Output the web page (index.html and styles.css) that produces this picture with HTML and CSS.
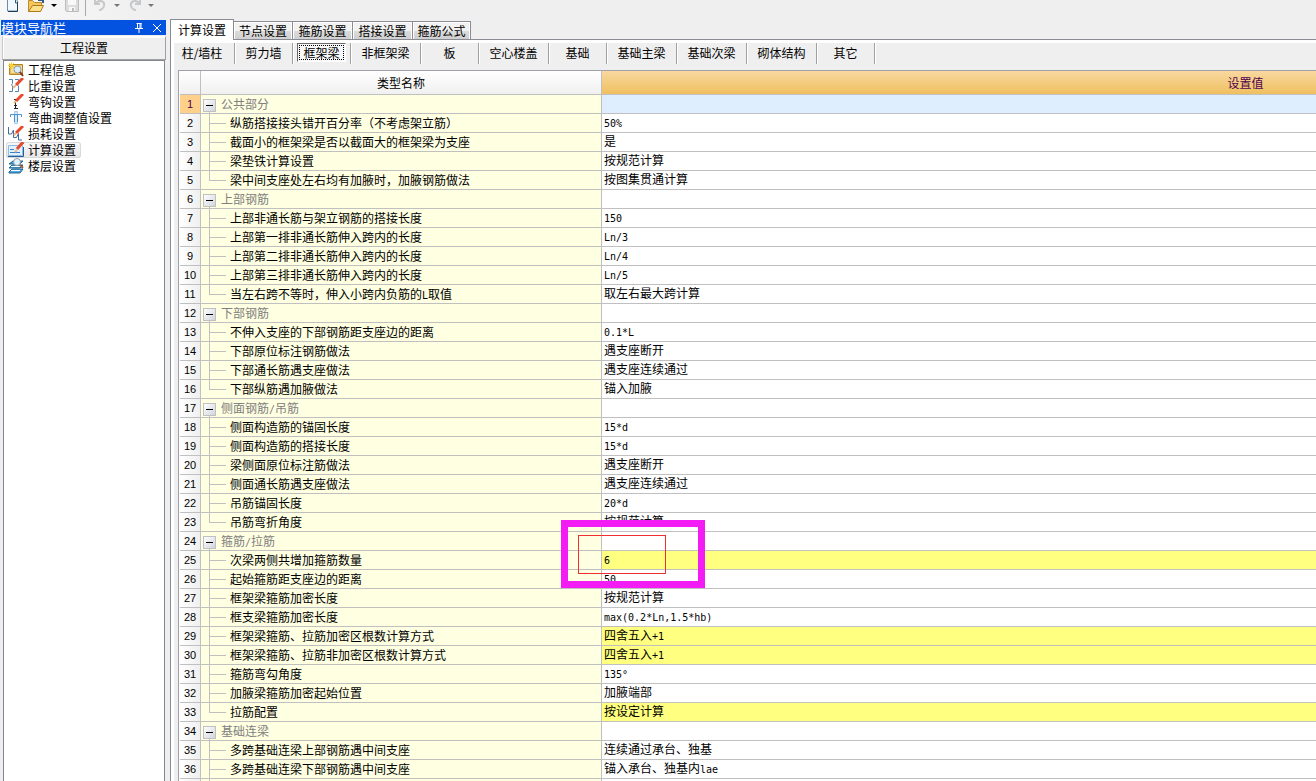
FILE: index.html
```html
<!DOCTYPE html>
<html lang="zh-CN">
<head>
<meta charset="utf-8">
<title>工程设置</title>
<link rel="stylesheet" href="styles.css">
</head>
<body>
<div class="app">
<header class="toolbar">
  <button class="tool" aria-label="新建"><svg width="16" height="16" viewBox="0 0 16 16"><path d="M3.500 -2h7l3 3v10h-10z" fill="#f2f8ff" stroke="#6d8ba3"/><path d="M13.500 2v9.500H4" fill="none" stroke="#1e4055"/><path d="M11.500 0v3h2" fill="none" stroke="#2f5c7c"/></svg></button>
  <button class="tool open" aria-label="打开"><svg width="18" height="16" viewBox="0 0 18 16"><path d="M.5 11.500v-11h4l2 2h7v3" fill="#f3c75c" stroke="#c08a28"/><path d="M.5 11.500l4-6h11l-3 6z" fill="#ffe08a" stroke="#b07a1c"/><path d="M10 0h5v3" fill="none" stroke="#345a84" stroke-width="2"/></svg></button>
  <span class="caret"></span>
  <button class="tool save" aria-label="保存"><svg width="16" height="16" viewBox="0 0 16 16"><path d="M1.500 -2h13v13.500h-12l-1-1z" fill="#dcdcdc" stroke="#bdbdbd"/><path d="M4 -1h8v6H4zM5 7h6v4H5z" fill="#f8f8f8"/><path d="M8 8h2v3H8z" fill="#bbb"/></svg></button>
  <span class="divider"></span>
  <button class="tool" aria-label="撤销"><svg width="16" height="16" viewBox="0 0 16 16"><path d="M2 -1v5h5M2 4c5-6 10-2 9 2-1 3-3 4-5 4" fill="none" stroke="#c6c8ca" stroke-width="2"/></svg></button>
  <span class="caret dim"></span>
  <button class="tool redo" aria-label="恢复"><svg width="16" height="16" viewBox="0 0 16 16"><path d="M13 -1v5H8M13 4C8-2 3 2 4 6c1 3 3 4 5 4" fill="none" stroke="#c6c8ca" stroke-width="2"/></svg></button>
  <span class="caret dim"></span>
</header>
<div class="body">
<aside class="sidebar">
  <div class="titlebar"><span class="title">模块导航栏</span>
    <button aria-label="固定"><svg width="10" height="10" viewBox="0 0 10 10"><path d="M2.500 .5h5M3.500 0v6M7 0v6M6 0v6M1 5.500h8M5 6v4" fill="none" stroke="#fff"/></svg></button>
    <button aria-label="关闭"><svg width="10" height="10" viewBox="0 0 10 10"><path d="M1 1l8 8M9 1L1 9" fill="none" stroke="#fff"/></svg></button>
  </div>
  <button class="section">工程设置</button>
  <nav class="list">
    <a href="#info"><svg width="16" height="16" viewBox="0 0 16 16"><path d="M1.500 2.500h13v10h-13z" fill="#e9bd54" stroke="#b5852a"/><path d="M6 4h8v7H3V7z" fill="#f7dd96"/><path d="M3.500 0v7M0 3.500h7M1 1l5 5M6 1L1 6" stroke="#f6d437"/><circle cx="9.500" cy="7.500" r="3.500" fill="#d9edff" stroke="#8c9dab"/><path d="M12 10l3 4" stroke="#7d3c1e" stroke-width="2"/></svg>工程信息</a>
    <a href="#weight"><svg width="16" height="16" viewBox="0 0 16 16"><path d="M1 1.500h3.500v4l-1 1.500 1 1v5.500H1M7 1.500h3.500v4l-1 1.500 1 1v5.500H7" fill="none" stroke="#5182b8"/><path d="M8 7l7-7" stroke="#e54a2e" stroke-width="3"/><path d="M5 10l3-3" stroke="#e8b987" stroke-width="2"/></svg>比重设置</a>
    <a href="#hook"><svg width="16" height="16" viewBox="0 0 16 16"><path d="M6 5.500h3M7.500 5v9M6 14.500h4M6 11.500h3" fill="none" stroke="#222"/><path d="M8 7l7-7" stroke="#e54a2e" stroke-width="3"/><path d="M6 9l2-2" stroke="#e8b987" stroke-width="2"/></svg>弯钩设置</a>
    <a href="#bend"><svg width="16" height="16" viewBox="0 0 16 16"><path d="M6.500 1.500h3v12h-3z" fill="#d4e9f8" stroke="#a8cde8"/><path d="M2.500 7V4.500h11V7M6.500 5v7M9.500 5v7" fill="none" stroke="#4b94d2"/></svg>弯曲调整值设置</a>
    <a href="#loss"><svg width="16" height="16" viewBox="0 0 16 16"><path d="M.5 1v7h3l2-4v7.500h3l2-4v6.500H14" fill="none" stroke="#416c9c"/><path d="M8 7l7-7" stroke="#e54a2e" stroke-width="3"/><path d="M6 9l2-2" stroke="#e8b987" stroke-width="2"/></svg>损耗设置</a>
    <a href="#calc" class="selected" aria-current="page"><svg width="16" height="16" viewBox="0 0 16 16"><path d="M.5 3.500h14v10H.5z" fill="#e3f1ff" stroke="#8fbbe2"/><path d="M0 14.500h15.500V5" fill="none" stroke="#245ea0"/><path d="M2 7.500h4M2 10.500h10" stroke="#3382ca"/><path d="M9 7l6-7" stroke="#e54a2e" stroke-width="3"/><path d="M7 10l2-2" stroke="#e8b987" stroke-width="2"/></svg>计算设置</a>
    <a href="#floor"><svg width="16" height="16" viewBox="0 0 16 16"><path d="M1 6l4-3h10l-3 3zM1 10l3-3h11l-3 3zM1 14l3-3h11l-3 4H1z" fill="#50a6e0" stroke="#1e6394"/><path d="M3 8.500h10M3 12.500h9" stroke="#fff"/><circle cx="9" cy="4" r="3.500" fill="#e4f2fb" stroke="#8d9ca8"/><path d="M12 7l3 3" stroke="#9a5935" stroke-width="2"/></svg>楼层设置</a>
  </nav>
</aside>
<main class="main">
  <div class="tabs" role="tablist">
    <button role="tab" aria-selected="true" class="active">计算设置</button>
    <button role="tab">节点设置</button>
    <button role="tab">箍筋设置</button>
    <button role="tab">搭接设置</button>
    <button role="tab">箍筋公式</button>
  </div>
  <div class="page">
    <div class="kinds">
      <div class="kind first"><button>柱/墙柱</button></div>
      <div class="kind"><button>剪力墙</button></div>
      <div class="kind"><button class="pressed" aria-pressed="true">框架梁</button></div>
      <div class="kind wide"><button>非框架梁</button></div>
      <div class="kind"><button>板</button></div>
      <div class="kind wide"><button>空心楼盖</button></div>
      <div class="kind"><button>基础</button></div>
      <div class="kind wide"><button>基础主梁</button></div>
      <div class="kind wide"><button>基础次梁</button></div>
      <div class="kind wide"><button>砌体结构</button></div>
      <div class="kind"><button>其它</button></div>
    </div>
    <div class="sheet">
      <table class="grid">
        <colgroup><col class="c-num"><col class="c-name"><col class="c-value"></colgroup>
        <thead><tr><th></th><th>类型名称</th><th class="current">设置值</th></tr></thead>
        <tbody>
        <tr class="group current"><th>1</th><td><button class="fold" aria-label="折叠"></button>公共部分</td><td></td></tr>
        <tr><th>2</th><td>纵筋搭接接头错开百分率（不考虑架立筋）</td><td><span class="mono">50%</span></td></tr>
        <tr><th>3</th><td>截面小的框架梁是否以截面大的框架梁为支座</td><td>是</td></tr>
        <tr><th>4</th><td>梁垫铁计算设置</td><td>按规范计算</td></tr>
        <tr class="last"><th>5</th><td>梁中间支座处左右均有加腋时，加腋钢筋做法</td><td>按图集贯通计算</td></tr>
        <tr class="group"><th>6</th><td><button class="fold" aria-label="折叠"></button>上部钢筋</td><td></td></tr>
        <tr><th>7</th><td>上部非通长筋与架立钢筋的搭接长度</td><td><span class="mono">150</span></td></tr>
        <tr><th>8</th><td>上部第一排非通长筋伸入跨内的长度</td><td><span class="mono">Ln/3</span></td></tr>
        <tr><th>9</th><td>上部第二排非通长筋伸入跨内的长度</td><td><span class="mono">Ln/4</span></td></tr>
        <tr><th>10</th><td>上部第三排非通长筋伸入跨内的长度</td><td><span class="mono">Ln/5</span></td></tr>
        <tr class="last"><th>11</th><td>当左右跨不等时，伸入小跨内负筋的<span class="mono">L</span>取值</td><td>取左右最大跨计算</td></tr>
        <tr class="group"><th>12</th><td><button class="fold" aria-label="折叠"></button>下部钢筋</td><td></td></tr>
        <tr><th>13</th><td>不伸入支座的下部钢筋距支座边的距离</td><td><span class="mono">0.1*L</span></td></tr>
        <tr><th>14</th><td>下部原位标注钢筋做法</td><td>遇支座断开</td></tr>
        <tr><th>15</th><td>下部通长筋遇支座做法</td><td>遇支座连续通过</td></tr>
        <tr class="last"><th>16</th><td>下部纵筋遇加腋做法</td><td>锚入加腋</td></tr>
        <tr class="group"><th>17</th><td><button class="fold" aria-label="折叠"></button>侧面钢筋<span class="mono">/</span>吊筋</td><td></td></tr>
        <tr><th>18</th><td>侧面构造筋的锚固长度</td><td><span class="mono">15*d</span></td></tr>
        <tr><th>19</th><td>侧面构造筋的搭接长度</td><td><span class="mono">15*d</span></td></tr>
        <tr><th>20</th><td>梁侧面原位标注筋做法</td><td>遇支座断开</td></tr>
        <tr><th>21</th><td>侧面通长筋遇支座做法</td><td>遇支座连续通过</td></tr>
        <tr><th>22</th><td>吊筋锚固长度</td><td><span class="mono">20*d</span></td></tr>
        <tr class="last"><th>23</th><td>吊筋弯折角度</td><td>按规范计算</td></tr>
        <tr class="group"><th>24</th><td><button class="fold" aria-label="折叠"></button>箍筋<span class="mono">/</span>拉筋</td><td></td></tr>
        <tr class="changed"><th>25</th><td>次梁两侧共增加箍筋数量</td><td><span class="mono">6</span></td></tr>
        <tr><th>26</th><td>起始箍筋距支座边的距离</td><td><span class="mono">50</span></td></tr>
        <tr><th>27</th><td>框架梁箍筋加密长度</td><td>按规范计算</td></tr>
        <tr><th>28</th><td>框支梁箍筋加密长度</td><td><span class="mono">max(0.2*Ln,1.5*hb)</span></td></tr>
        <tr class="changed"><th>29</th><td>框架梁箍筋、拉筋加密区根数计算方式</td><td>四舍五入<span class="mono">+1</span></td></tr>
        <tr class="changed"><th>30</th><td>框架梁箍筋、拉筋非加密区根数计算方式</td><td>四舍五入<span class="mono">+1</span></td></tr>
        <tr><th>31</th><td>箍筋弯勾角度</td><td><span class="mono">135°</span></td></tr>
        <tr><th>32</th><td>加腋梁箍筋加密起始位置</td><td>加腋端部</td></tr>
        <tr class="last changed"><th>33</th><td>拉筋配置</td><td>按设定计算</td></tr>
        <tr class="group"><th>34</th><td><button class="fold" aria-label="折叠"></button>基础连梁</td><td></td></tr>
        <tr><th>35</th><td>多跨基础连梁上部钢筋遇中间支座</td><td>连续通过承台、独基</td></tr>
        <tr><th>36</th><td>多跨基础连梁下部钢筋遇中间支座</td><td>锚入承台、独基内<span class="mono">lae</span></td></tr>
        <tr><th></th><td></td><td></td></tr>
        </tbody>
      </table>
      <div class="mark outer"></div>
      <div class="mark inner"></div>
    </div>
  </div>
</main>
</div>
</div>
</body>
</html>
```
FILE: styles.css
```css
* { box-sizing: border-box; }
body {
  margin: 0;
  background: #efefef;
  color: #000;
  font: 12px/16px "Noto Sans CJK SC", sans-serif;
}
button {
  margin: 0;
  padding: 0;
  border: 0;
  background: none;
  color: inherit;
  font: inherit;
}
svg { display: block; flex: none; }
.app { display: flex; flex-direction: column; height: 100vh; overflow: hidden; }

.toolbar {
  display: flex;
  align-items: flex-start;
  align-self: flex-start;
  flex: none;
  height: 19px;
  padding: 0 4px 3px;
  background: linear-gradient(90deg, #f8f8f8, #efefef);
}
.tool.open { margin-left: 8px; }
.tool.save { margin-left: 7px; }
.tool.redo { margin-left: 7px; }
.caret {
  margin: 4px 0 0 5px;
  border: 3px solid transparent;
  border-top-color: #000;
  border-bottom: 0;
}
.caret.dim { border-top-color: #777; }
.divider { width: 1px; height: 16px; margin: 0 7px 0 5px; background: #aaa; }

.body { display: flex; flex: 1; min-height: 0; }
.sidebar { display: flex; flex-direction: column; flex: none; width: 166px; padding: 1px 0 0 1px; }
.titlebar {
  display: flex;
  align-items: center;
  gap: 8px;
  height: 15px;
  padding-right: 4px;
  background: #0453e0;
  color: #fff;
}
.title { flex: 1; font-size: 13px; line-height: 13px; }
.section {
  height: 24px;
  margin: 1px 0 0 1px;
  border: 1px solid #a0a0a0;
  border-top-color: #fff;
  border-left-color: #c8c8c8;
  box-shadow: inset 1px 1px #fff;
}
.list {
  flex: 1;
  margin: 0 1px 0 2px;
  padding: 1px 2px;
  border: 1px solid #828790;
  border-bottom: 0;
  background: #fff;
}
.list a {
  display: flex;
  align-items: center;
  gap: 4px;
  width: max-content;
  height: 16px;
  padding: 0 5px 0 2px;
  color: #000;
  text-decoration: none;
}
.list .selected {
  border-radius: 3px;
  background: linear-gradient(#f8f8f8, #e6e6e6);
  box-shadow: inset 0 0 0 1px #d9d9d9;
}

.main { display: flex; flex-direction: column; flex: 1; min-width: 0; margin-left: 4px; }
.tabs { display: flex; align-items: flex-end; flex: none; height: 21px; box-shadow: inset 0 -1px #898c95; }
.tabs button {
  width: 60px;
  height: 19px;
  border: 1px solid #898c95;
  border-left: 0;
  background: linear-gradient(#f2f2f2 50%, #dcdcdc 50%, #d0d0d0);
  box-shadow: inset 1px 1px #fff, inset -1px 0 #fff;
}
.tabs .active + button { width: 59px; }
.tabs button:last-child { width: 58px; }
.tabs .active {
  width: 64px;
  height: 21px;
  border-left: 1px solid #898c95;
  border-bottom: 0;
  background: #fff;
}
.page {
  display: flex;
  flex-direction: column;
  flex: 1;
  min-height: 0;
  border-left: 1px solid #898c95;
  background: linear-gradient(#efefef, #efefef) 3px 3px no-repeat #fff;
}
.kinds { display: flex; flex: none; height: 30px; padding: 3px 0 6px 3px; }
.kind {
  display: flex;
  align-items: center;
  justify-content: center;
  flex: none;
  width: 58px;
  padding-bottom: 2px;
  border-right: 1px solid #a0a0a0;
  box-shadow: 1px 0 #fff;
}
.kind.first { width: 61px; padding-right: 4px; }
.kind.wide { width: 70px; }
.pressed {
  height: 19px;
  padding: 1px 5px 0;
  border: 1px solid;
  border-color: #696969 #fff #fff #696969;
  outline: 1px dotted #000;
  outline-offset: -3px;
  background: #f8f8f8;
  line-height: 16px;
}

.sheet {
  position: relative;
  flex: 1;
  min-height: 0;
  margin-left: 7px;
  padding-left: 1px;
  overflow: hidden;
  border-top: 1px solid #a0a0a8;
  border-left: 1px solid #a0a0a8;
  background: #fff;
}
.grid { width: 1710px; table-layout: fixed; border-spacing: 0; }
.c-num { width: 21px; }
.c-name { width: 401px; }
.grid th, .grid td {
  height: 19px;
  padding: 0;
  border-right: 1px solid #c0c0c0;
  border-bottom: 1px solid #c0c0c0;
  font-weight: normal;
  line-height: 18px;
  white-space: nowrap;
}
.grid thead th { height: 24px; background: linear-gradient(#fff, #f0f0f0); }
.grid thead .current { background: linear-gradient(#f9d8a0, #efc060); color: #500050; }
.grid tbody th {
  background: linear-gradient(90deg, #fff, #efefef);
  font-family: "Liberation Sans", sans-serif;
  font-size: 11px;
}
.grid .current th { background: #ffd08a; color: #500050; }
.grid .current td:last-child { background: #deeeff; }
.grid td:last-child { padding-left: 2px; line-height: 16px; padding-bottom: 2px; }
.grid .changed td:last-child { background: #ffff80; }
.grid td:nth-child(2) {
  padding-left: 29px;
  background:
    linear-gradient(#c0c0c0, #c0c0c0) 8px 0 / 1px 19px no-repeat,
    linear-gradient(#c0c0c0, #c0c0c0) 8px 9px / 17px 1px no-repeat,
    #ffffe1;
}
.grid .last td:nth-child(2) {
  background:
    linear-gradient(#c0c0c0, #c0c0c0) 8px 0 / 1px 9px no-repeat,
    linear-gradient(#c0c0c0, #c0c0c0) 8px 9px / 17px 1px no-repeat,
    #ffffe1;
}
.grid .group td:nth-child(2) {
  padding-left: 2px;
  background: linear-gradient(#c0c0c0, #c0c0c0) 8px 16px / 1px 3px no-repeat #ffffe1;
  color: #808080;
}
.fold {
  width: 13px;
  height: 13px;
  margin-right: 5px;
  border: 1px solid #c0c0c0;
  background:
    linear-gradient(#000, #000) 2px 5px / 7px 1px no-repeat,
    linear-gradient(135deg, #fff, #d0d4dc);
  vertical-align: -2px;
}
.mono { font-family: "DejaVu Sans Mono", monospace; font-size: 10px; line-height: 10px; }

.mark { position: absolute; pointer-events: none; }
.mark.outer { left: 382px; top: 449px; width: 144px; height: 68px; border: 7px solid #f41cf4; }
.mark.inner { left: 399px; top: 464px; width: 88px; height: 39px; border: 1px solid #f03030; }
```
